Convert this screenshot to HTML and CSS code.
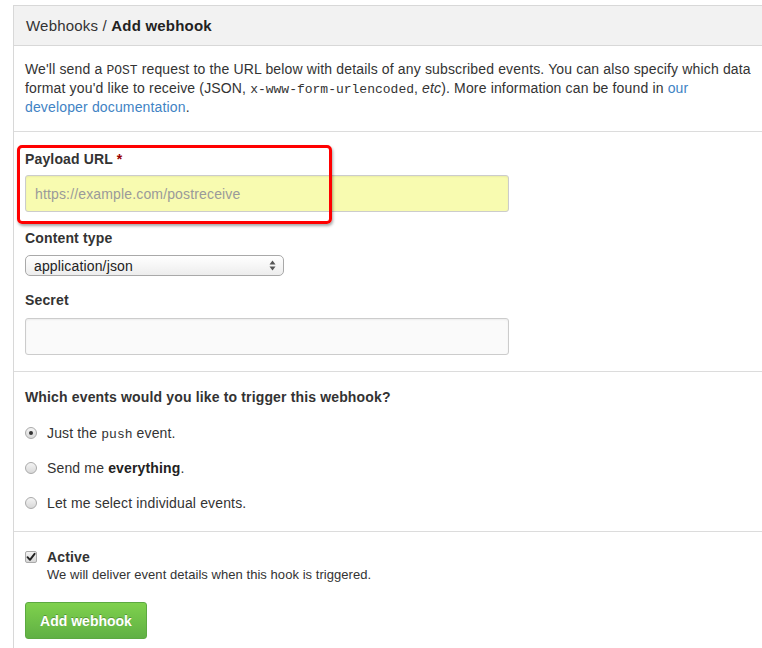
FILE: index.html
```html
<!DOCTYPE html>
<html>
<head>
<meta charset="utf-8">
<link rel="stylesheet" href="styles.css">
</head>
<body>
<div class="box">
  <div class="box-header">Webhooks / <strong>Add webhook</strong></div>
  <div class="intro">
    We'll send a <code>POST</code> request to the URL below with details of any subscribed events. You can also specify which data format you'd like to receive (JSON, <code>x-www-form-urlencoded</code>, <em>etc</em>). More information can be found in <a href="#">our developer documentation</a>.
  </div>
  <div class="section form">
    <div class="field payload">
      <label class="label">Payload URL <span class="req">*</span></label>
      <div class="input yellow"><span class="placeholder">https://example.com/postreceive</span></div>
      <div class="highlight"></div>
    </div>
    <div class="field ct">
      <label class="label">Content type</label>
      <div class="select">
        <span>application/json</span>
        <svg class="arrows" width="7" height="11" viewBox="0 0 7 11"><path d="M3.5 0.5 L6.5 4.5 L0.5 4.5 Z" fill="#555"/><path d="M3.5 10.5 L6.5 6.5 L0.5 6.5 Z" fill="#555"/></svg>
      </div>
    </div>
    <div class="field secret">
      <label class="label">Secret</label>
      <div class="input grey"></div>
    </div>
  </div>
  <div class="section events">
    <div class="label">Which events would you like to trigger this webhook?</div>
    <div class="options">
      <div class="option"><span class="radio checked"></span><span>Just the <code class="inline">push</code> event.</span></div>
      <div class="option"><span class="radio"></span><span>Send me <strong>everything</strong>.</span></div>
      <div class="option"><span class="radio"></span><span>Let me select individual events.</span></div>
    </div>
  </div>
  <div class="section active">
    <div class="check-row">
      <span class="checkbox">
        <svg width="10" height="10" viewBox="0 0 10 10"><path d="M1.5 5.2 L4 7.8 L8.6 1.8" fill="none" stroke="#222" stroke-width="1.9" stroke-linecap="round" stroke-linejoin="round"/></svg>
      </span>
      <div class="check-text">
        <div class="check-title">Active</div>
        <div class="note">We will deliver event details when this hook is triggered.</div>
      </div>
    </div>
    <button class="btn">Add webhook</button>
  </div>
</div>
</body>
</html>
```

FILE: styles.css
```css
html, body {
  margin: 0;
  padding: 0;
  overflow: hidden;
  background: #fff;
}
body {
  font-family: "Liberation Sans", Arial, Helvetica, sans-serif;
  font-size: 14px;
  letter-spacing: 0.15px;
  color: #333;
}
.box {
  margin: 5px 0 0 13px;
  width: 749px;
  border: 1px solid #d8d8d8;
  border-right: none;
  box-sizing: border-box;
}
.box-header {
  height: 39px;
  line-height: 39px;
  background: #f2f2f2;
  border-bottom: 1px solid #d8d8d8;
  padding-left: 12px;
  font-size: 15px;
  letter-spacing: 0.2px;
  color: #333;
}
.box-header strong {
  color: #222;
}
.intro {
  padding: 14px 10px 14px 11px;
  line-height: 19px;
  border-bottom: 1px solid #dcdcdc;
}
.intro code, .inline {
  font-family: "Liberation Mono", "DejaVu Sans Mono", monospace;
  font-size: 13px;
  line-height: 13px;
  letter-spacing: 0;
  color: #333;
}
.intro a {
  color: #4183c4;
  text-decoration: none;
}
.section {
  padding-left: 11px;
  padding-right: 10px;
  border-bottom: 1px solid #dcdcdc;
}
.form {
  padding-top: 18px;
  padding-bottom: 16px;
}
.label {
  display: block;
  font-weight: bold;
  line-height: 18px;
  color: #333;
}
.req {
  color: #900;
}
.field {
  position: relative;
}
.payload .input {
  margin-top: 7px;
}
.ct {
  margin-top: 17px;
}
.secret {
  margin-top: 15px;
}
.secret .input {
  margin-top: 9px;
}
.input {
  width: 484px;
  height: 37px;
  box-sizing: border-box;
  border: 1px solid #cccccc;
  border-radius: 3px;
  box-shadow: inset 0 1px 2px rgba(0,0,0,0.06);
  display: flex;
  align-items: center;
  padding-left: 9px;
}
.yellow {
  background: #f8fbb0;
}
.grey {
  background: #fafafa;
}
.placeholder {
  color: #9a9a9a;
  font-size: 14px;
}
.highlight {
  position: absolute;
  left: -8px;
  top: -5px;
  width: 315px;
  height: 79px;
  box-sizing: border-box;
  border: 3px solid #ff0000;
  border-radius: 5px;
  box-shadow: 1px 2px 3px rgba(0,0,0,0.35);
}
.select {
  margin-top: 8px;
  width: 259px;
  height: 21px;
  box-sizing: border-box;
  border: 1px solid #a9a9a9;
  border-radius: 5px;
  background: linear-gradient(#ffffff, #ededed);
  display: flex;
  align-items: center;
  justify-content: space-between;
  padding: 0 7px 0 8px;
  font-size: 14px;
  color: #222;
}
.events {
  padding-top: 16px;
  padding-bottom: 19px;
}
.options {
  margin-top: 18px;
  display: flex;
  flex-direction: column;
  gap: 17px;
}
.option {
  display: flex;
  align-items: center;
  line-height: 18px;
  height: 18px;
  gap: 10px;
}
.radio {
  width: 12px;
  height: 12px;
  flex: none;
  box-sizing: border-box;
  border-radius: 50%;
  border: 1px solid #aaa;
  background: linear-gradient(#f4f4f4, #d8d8d8);
  position: relative;
}
.radio.checked::after {
  content: "";
  position: absolute;
  left: 3px;
  top: 3px;
  width: 4px;
  height: 4px;
  border-radius: 50%;
  background: #333;
}
.option strong {
  color: #222;
}
.active {
  padding-top: 16px;
  padding-bottom: 9px;
  border-bottom: none;
}
.check-row {
  display: flex;
  align-items: flex-start;
  gap: 10px;
}
.checkbox {
  width: 12px;
  height: 12px;
  flex: none;
  margin-top: 3px;
  box-sizing: border-box;
  border: 1px solid #aaa;
  border-radius: 2px;
  background: linear-gradient(#f4f4f4, #d6d6d6);
  display: flex;
  align-items: center;
  justify-content: center;
}
.check-title {
  font-weight: bold;
  line-height: 18px;
}
.note {
  font-size: 13px;
  letter-spacing: 0.05px;
  line-height: 18px;
}
.btn {
  margin-top: 18px;
  width: 122px;
  height: 37px;
  border: 1px solid #5ca941;
  border-radius: 3px;
  background: linear-gradient(#7fd14d, #60b044);
  color: #fff;
  font-family: "Liberation Sans", Arial, sans-serif;
  font-weight: bold;
  font-size: 14px;
  letter-spacing: 0;
  text-shadow: 0 -1px 0 rgba(0,0,0,0.25);
  padding: 0;
  display: block;
}
```
